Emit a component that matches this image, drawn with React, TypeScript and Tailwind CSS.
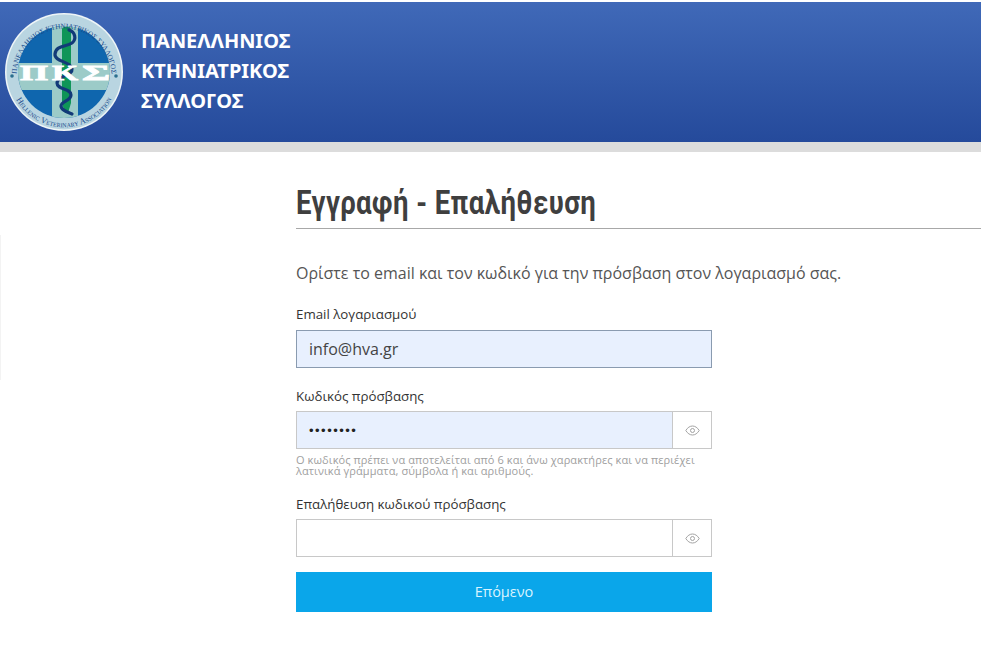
const EyeIcon = () => (
  <svg width="15" height="11" viewBox="0 0 15 11" fill="none" stroke="#a3a3a3" strokeWidth="1">
    <path d="M0.8 5.5C2.6 2.5 5 1 7.5 1s4.9 1.5 6.7 4.5C12.4 8.5 10 10 7.5 10S2.600 8.500 0.800 5.500Z" />
    <circle cx="7.5" cy="5.500" r="2" />
  </svg>
);

const Logo = () => (
  <svg width="124" height="124" viewBox="0 0 124 124" className="shrink-0">
    <defs>
      <path id="arcTop" d="M15.500 66A47.500 47.500 0 1 1 110.500 66" />
      <path id="arcBottom" d="M8.200 67A55 55 0 0 0 117.800 67" />
      <clipPath id="inner">
        <circle cx="63" cy="62" r="46" />
      </clipPath>
    </defs>
    <circle cx="63" cy="62" r="59" fill="#eef5f7" />
    <circle cx="63" cy="62" r="57.500" fill="#b9d5e1" />
    <circle cx="63" cy="62" r="46" fill="#0f66ae" />
    <g clipPath="url(#inner)">
      <rect x="51" y="10" width="26" height="104" fill="#9ccbc8" />
      <rect x="10" y="53" width="106" height="27" fill="#9ccbc8" />
    </g>
    <path d="M61 19c0-3 9-3 9 0v74l-3 10h-3l-3-10Z" fill="#0f9558" />
    <path
      d="M68 20c6 2 8 9 3 13c-6 4-16 2-17 11c-1 8 16 7 17 15c1 7-14 6-15 14c0 7 14 5 14 12c0 6-10 6-10 11c0 4 6 6 11 8"
      fill="none"
      stroke="#123a78"
      strokeWidth="3.200"
      strokeLinecap="round"
    />
    <g fill="#ffffff" stroke="#ffffff" strokeWidth="0.800" fontFamily="'Liberation Serif', serif" fontWeight="700" fontSize="22">
      <text x="19" y="70" textLength="28" lengthAdjust="spacingAndGlyphs">Π</text>
      <text x="51" y="70" textLength="26" lengthAdjust="spacingAndGlyphs">Κ</text>
      <text x="81" y="70" textLength="28" lengthAdjust="spacingAndGlyphs">Σ</text>
    </g>
    <text fontFamily="'Liberation Serif', serif" fontSize="7.200" fill="#174a8c">
      <textPath href="#arcTop" startOffset="50%" textAnchor="middle">
        ΠΑΝΕΛΛΗΝΙΟΣ ΚΤΗΝΙΑΤΡΙΚΟΣ ΣΥΛΛΟΓΟΣ
      </textPath>
    </text>
    <text fontFamily="'Liberation Serif', serif" fontSize="8.500" fill="#174a8c" fontVariant="small-caps">
      <textPath href="#arcBottom" startOffset="50%" textAnchor="middle">
        Hellenic Veterinary Association
      </textPath>
    </text>
    <circle cx="11" cy="66" r="1.800" fill="#2b6f8f" />
    <circle cx="115" cy="66" r="1.800" fill="#2b6f8f" />
  </svg>
);

export default function App() {
  return (
    <div className="relative min-h-[650px] bg-white pt-[2px] font-['Open_Sans',sans-serif] text-[#3d3d3d]">
      {/* Header */}
      <header className="h-[140px] bg-gradient-to-b from-[#4069b8] to-[#254a9b] flex items-center pl-[1px]">
        <Logo />
        <div className="ml-4 text-white font-['Noto_Sans',sans-serif] font-bold text-[20px] leading-[30px] pb-[2px]">
          <div>ΠΑΝΕΛΛΗΝΙΟΣ</div>
          <div>ΚΤΗΝΙΑΤΡΙΚΟΣ</div>
          <div>ΣΥΛΛΟΓΟΣ</div>
        </div>
      </header>
      <div className="h-[10px] bg-[#dcdcdc]" />
      <div className="absolute left-0 top-[235px] h-[145px] w-[1px] bg-[#f3f3f3]" />

      <main className="pl-[296px]">
        <div className="pt-[30px] pb-[5px] border-b border-[#a8a8a8]">
          <h1 className="font-['Roboto',sans-serif] font-bold text-[34px] leading-[41px] tracking-[0.5px] text-[#3f3f3f] origin-left scale-x-[0.81] whitespace-nowrap">
            Εγγραφή - Επαλήθευση
          </h1>
        </div>

        <p className="mt-[32px] text-[16px] leading-[24px] text-[#555555]">
          Ορίστε το email και τον κωδικό για την πρόσβαση στον λογαριασμό σας.
        </p>

        <form className="w-[416px] mt-[20px]">
          <label className="block text-[13.300px] leading-[18px] font-medium text-[#333333]">Email λογαριασμού</label>
          <div className="mt-[7px] h-[38px] border border-[#8a9bb0] bg-[#e8f0fe] flex items-center pl-3 text-[16px] text-[#444444]">
            info@hva.gr
          </div>

          <label className="block mt-[19px] text-[13.300px] leading-[18px] font-medium text-[#333333]">Κωδικός πρόσβασης</label>
          <div className="mt-[6px] h-[38px] border border-[#c8c8c8] flex">
            <div className="flex-1 bg-[#e8f0fe] flex items-center pl-3 pt-[2px] text-[#222222] font-['Liberation_Sans',sans-serif] text-[13px] tracking-[1.500px]">
              ••••••••
            </div>
            <div className="w-[39px] border-l border-[#c8c8c8] flex items-center justify-center">
              <EyeIcon />
            </div>
          </div>
          <p className="mt-[5px] text-[11px] leading-[11px] text-[#a0a0a0] tracking-[0.1px]">
            Ο κωδικός πρέπει να αποτελείται από 6 και άνω χαρακτήρες και να περιέχει λατινικά γράμματα, σύμβολα ή και αριθμούς.
          </p>

          <label className="block mt-[19px] text-[13.300px] leading-[18px] font-medium text-[#333333]">Επαλήθευση κωδικού πρόσβασης</label>
          <div className="mt-[6px] h-[38px] border border-[#c8c8c8] flex">
            <div className="flex-1" />
            <div className="w-[39px] border-l border-[#c8c8c8] flex items-center justify-center">
              <EyeIcon />
            </div>
          </div>

          <button type="button" className="mt-[15px] w-full h-[40px] bg-[#0aa6ea] text-[#d9f4ff] text-[14.500px] font-medium">
            Επόμενο
          </button>
        </form>
      </main>
    </div>
  );
}
